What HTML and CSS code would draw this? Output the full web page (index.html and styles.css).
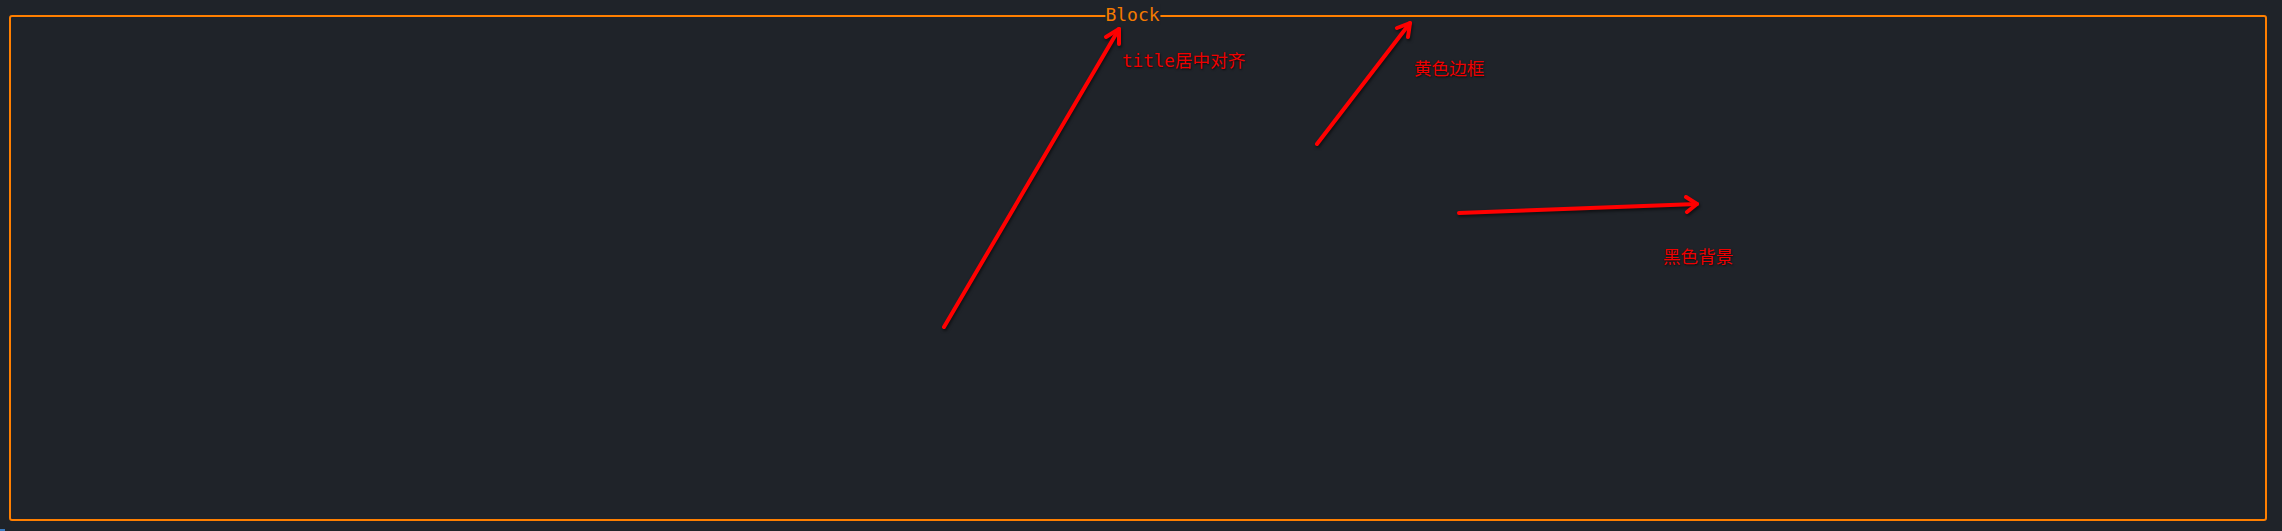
FILE: index.html
```html
<!DOCTYPE html>
<html lang="zh">
<head>
<meta charset="utf-8">
<title>Block</title>
<link rel="stylesheet" href="styles.css">
</head>
<body>
<div class="screen">
  <div class="block">
    <span class="block-title">Block</span>
  </div>
  <svg class="arrows" width="2282" height="531" viewBox="0 0 2282 531">
    <g class="arrow">
      <line x1="944" y1="327" x2="1119" y2="29"/>
      <polyline points="1106,37 1119,29 1119,44"/>
    </g>
    <g class="arrow">
      <line x1="1317" y1="144" x2="1410" y2="23"/>
      <polyline points="1397,28 1410,23 1408,37"/>
    </g>
    <g class="arrow">
      <line x1="1459" y1="213" x2="1697" y2="204"/>
      <polyline points="1686,197 1697,204 1687,212"/>
    </g>
  </svg>
  <span class="note note-title">title居中对齐</span>
  <span class="note note-border">黄色边框</span>
  <span class="note note-bg">黑色背景</span>
  <span class="cursor"></span>
</div>
</body>
</html>
```
FILE: styles.css
```css
html, body {
  margin: 0;
  padding: 0;
  background: #1f2329;
}
.screen {
  position: relative;
  width: 2282px;
  height: 531px;
  box-sizing: border-box;
  padding: 15px 15px 10px 9px;
  background: #1f2329;
  overflow: hidden;
}
.block {
  position: relative;
  width: 2258px;
  height: 506px;
  box-sizing: border-box;
  border: 2px solid #ff7f00;
  border-radius: 3px;
}
.block-title {
  position: absolute;
  top: -13px;
  left: 50%;
  transform: translateX(-50%);
  margin-left: -5px;
  padding: 0 1px 0 0;
  background: #1f2329;
  color: #f57a00;
  font-family: "DejaVu Sans Mono", monospace;
  font-size: 18px;
  line-height: 21px;
  white-space: nowrap;
}
.arrows {
  position: absolute;
  left: 0;
  top: 0;
  pointer-events: none;
}
.arrow {
  stroke: #ff0000;
  stroke-width: 4;
  stroke-linecap: round;
  stroke-linejoin: round;
  fill: none;
  filter: drop-shadow(1px 2px 1.5px rgba(0, 0, 0, 0.55));
}
.note {
  position: absolute;
  color: #ee0000;
  font-family: "DejaVu Sans Mono", "Noto Sans CJK SC", monospace;
  font-size: 17.6px;
  line-height: 20px;
  white-space: nowrap;
  text-shadow: 1px 1px 2px rgba(0, 0, 0, 0.7);
}
.note-title {
  left: 1122px;
  top: 51px;
}
.note-border {
  left: 1414px;
  top: 59px;
}
.note-bg {
  left: 1663px;
  top: 247px;
}
.cursor {
  position: absolute;
  left: 0;
  top: 529px;
  width: 5px;
  height: 2px;
  background: #3a7ac0;
}
```
